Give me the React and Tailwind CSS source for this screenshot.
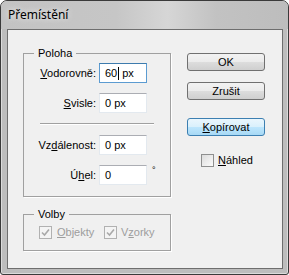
import React from "react";

// Windows 7 basic-style "Přemístění" (Move) dialog

const font = { fontFamily: '"Liberation Sans", Arial, sans-serif' };

const Field = ({ children, focused }) => (
  <div
    className={`ml-[3px] flex h-[20px] w-[48px] items-center bg-white pl-[5px] text-[11px] text-black ${
      focused
        ? "border border-[#5b9bd1] border-t-[#3d7bad]"
        : "border border-[#e3e9ef] border-t-[#abadb3]"
    }`}
  >
    {children}
  </div>
);

const Row = ({ label, children, focused, extra }) => (
  <div className="flex h-[20px] items-center">
    <div className="w-[72px] text-right text-[11px] text-black">{label}</div>
    <Field focused={focused}>{children}</Field>
    {extra}
  </div>
);

const Button = ({ children, primary }) => (
  <div
    className={`flex h-[18px] w-[78px] items-center justify-center rounded-[3px] border text-[11px] text-black ${
      primary
        ? "border-[#3c7fb1] bg-[linear-gradient(to_bottom,#eaf6fd_0%,#d9f0fc_50%,#bee6fd_50%,#a7d9f5_100%)]"
        : "border-[#707070] bg-[linear-gradient(to_bottom,#f2f2f2_0%,#ebebeb_50%,#dddddd_50%,#cfcfcf_100%)]"
    }`}
  >
    {children}
  </div>
);

const CheckBox = ({ checked, disabled }) => (
  <div
    className={`flex h-[13px] w-[13px] items-center justify-center border ${
      disabled
        ? "border-[#b1b1b1] bg-[#f4f4f4]"
        : "border-[#8e8f8f] bg-[linear-gradient(135deg,#dcdcdc,#fbfbfb)]"
    }`}
  >
    {checked && (
      <svg width="9" height="9" viewBox="0 0 9 9">
        <path d="M1 4.5 L3.5 7 L8 1.5" fill="none" stroke="#a9a9a9" strokeWidth="1.6" />
      </svg>
    )}
  </div>
);

const Group = ({ title, className, children }) => (
  <div className={`relative border border-[#a0a0a0] shadow-[1px_1px_0_0_#ffffff] ${className}`}>
    <span className="absolute -top-[8px] left-[10px] bg-[#f0f0f0] px-[4px] text-[11px] leading-[14px] text-black">
      {title}
    </span>
    {children}
  </div>
);

export default function App() {
  return (
    <div
      style={font}
      className="h-[275px] w-[289px] overflow-hidden rounded-t-[7px] rounded-b-[3px] border border-[#3a3a3a] bg-[#bdbdbd] shadow-[inset_0_0_0_1px_rgba(255,255,255,0.45)]"
    >
      {/* title bar */}
      <div className="flex h-[28px] items-center bg-[linear-gradient(to_right,#c3c3c3_0%,#c6c6c6_40%,#d6d6d6_58%,#c2c2c2_75%,#bdbdbd_100%)] pl-[7px]">
        <span
          className="text-[12px] text-black [text-shadow:0_0_6px_#ffffff]"
          style={{ fontFamily: '"Noto Sans", "Open Sans", sans-serif' }}
        >
          Přemístění
        </span>
      </div>

      {/* client area */}
      <div className="ml-[6px] flex h-[240px] w-[276px] border border-[#6e6e6e] bg-[#f0f0f0]">
        <div className="flex flex-col pl-[15px] pt-[23px]">
          <Group title="Poloha" className="w-[148px] pb-[11px] pt-[9px]">
            <div className="flex flex-col gap-[10px]">
              <Row
                focused
                label={
                  <>
                    <u>V</u>odorovně:
                  </>
                }
              >
                <span>60</span>
                <span className="ml-[1px] mr-[3px] h-[13px] w-[1px] bg-black" />
                <span>px</span>
              </Row>
              <Row
                label={
                  <>
                    <u>S</u>visle:
                  </>
                }
              >
                0 px
              </Row>
            </div>
            <div className="ml-[16px] mt-[10px] h-[1px] w-[114px] bg-[#a0a0a0] shadow-[0_1px_0_0_#ffffff]" />
            <div className="mt-[11px] flex flex-col gap-[10px]">
              <Row
                label={
                  <>
                    Vz<u>d</u>álenost:
                  </>
                }
              >
                0 px
              </Row>
              <Row
                label={
                  <>
                    Ú<u>h</u>el:
                  </>
                }
                extra={<span className="mb-[8px] ml-[5px] text-[9px] text-black">°</span>}
              >
                0
              </Row>
            </div>
          </Group>

          <Group title="Volby" className="mt-[17px] flex h-[37px] w-[148px] items-center pl-[15px]">
            <div className="flex w-[65px] items-center gap-[5px] text-[11px] text-[#9d9d9d]">
              <CheckBox checked disabled />
              <span>
                <u>O</u>bjekty
              </span>
            </div>
            <div className="flex items-center gap-[4px] text-[11px] text-[#9d9d9d]">
              <CheckBox checked disabled />
              <span>
                V<u>z</u>orky
              </span>
            </div>
          </Group>
        </div>

        <div className="ml-[16px] flex flex-col pt-[23px]">
          <Button>OK</Button>
          <div className="mt-[11px]">
            <Button>Zrušit</Button>
          </div>
          <div className="mt-[18px]">
            <Button primary>
              <span>
                <u>K</u>opírovat
              </span>
            </Button>
          </div>
          <div className="ml-[14px] mt-[16px] flex items-center gap-[4px] text-[11px] text-black">
            <CheckBox />
            <span>
              <u>N</u>áhled
            </span>
          </div>
        </div>
      </div>
    </div>
  );
}
